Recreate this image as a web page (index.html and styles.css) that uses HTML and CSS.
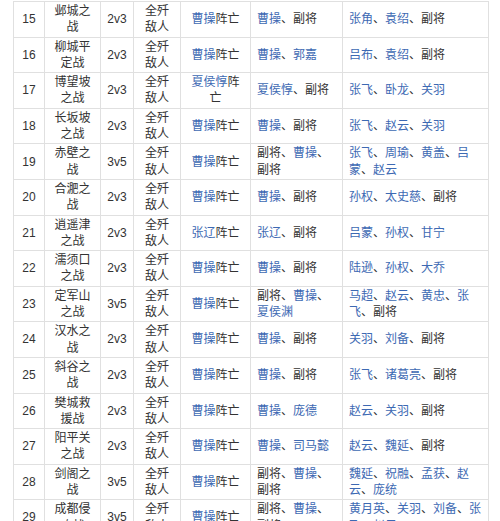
FILE: index.html
```html
<!DOCTYPE html>
<html lang="zh-CN">
<head>
<meta charset="utf-8">
<title>战役列表</title>
<link rel="stylesheet" href="styles.css">
</head>
<body>
<table class="battles">
<colgroup>
<col class="c-no"><col class="c-name"><col class="c-mode"><col class="c-cond"><col class="c-fail"><col class="c-ours"><col class="c-foe">
</colgroup>
<tbody>
<tr><td class="ctr">15</td><td class="ctr">邺城之战</td><td class="ctr nw">2v3</td><td class="ctr">全歼敌人</td><td class="ctr"><span class="l">曹操</span>阵亡</td><td><span class="l">曹操</span>、副将</td><td class="foe"><span class="l">张角</span>、<span class="l">袁绍</span>、副将</td></tr>
<tr><td class="ctr">16</td><td class="ctr">柳城平定战</td><td class="ctr nw">2v3</td><td class="ctr">全歼敌人</td><td class="ctr"><span class="l">曹操</span>阵亡</td><td><span class="l">曹操</span>、<span class="l">郭嘉</span></td><td class="foe"><span class="l">吕布</span>、<span class="l">袁绍</span>、副将</td></tr>
<tr><td class="ctr">17</td><td class="ctr">博望坡之战</td><td class="ctr nw">2v3</td><td class="ctr">全歼敌人</td><td class="ctr"><span class="l">夏侯惇</span>阵亡</td><td><span class="l">夏侯惇</span>、副将</td><td class="foe"><span class="l">张飞</span>、<span class="l">卧龙</span>、<span class="l">关羽</span></td></tr>
<tr><td class="ctr">18</td><td class="ctr">长坂坡之战</td><td class="ctr nw">2v3</td><td class="ctr">全歼敌人</td><td class="ctr"><span class="l">曹操</span>阵亡</td><td><span class="l">曹操</span>、副将</td><td class="foe"><span class="l">张飞</span>、<span class="l">赵云</span>、<span class="l">关羽</span></td></tr>
<tr><td class="ctr">19</td><td class="ctr">赤壁之战</td><td class="ctr nw">3v5</td><td class="ctr">全歼敌人</td><td class="ctr"><span class="l">曹操</span>阵亡</td><td>副将、<span class="l">曹操</span>、副将</td><td class="foe"><span class="l">张飞</span>、<span class="l">周瑜</span>、<span class="l">黄盖</span>、<span class="l">吕蒙</span>、<span class="l">赵云</span></td></tr>
<tr><td class="ctr">20</td><td class="ctr">合淝之战</td><td class="ctr nw">2v3</td><td class="ctr">全歼敌人</td><td class="ctr"><span class="l">曹操</span>阵亡</td><td><span class="l">曹操</span>、副将</td><td class="foe"><span class="l">孙权</span>、<span class="l">太史慈</span>、副将</td></tr>
<tr><td class="ctr">21</td><td class="ctr">逍遥津之战</td><td class="ctr nw">2v3</td><td class="ctr">全歼敌人</td><td class="ctr"><span class="l">张辽</span>阵亡</td><td><span class="l">张辽</span>、副将</td><td class="foe"><span class="l">吕蒙</span>、<span class="l">孙权</span>、<span class="l">甘宁</span></td></tr>
<tr><td class="ctr">22</td><td class="ctr">濡须口之战</td><td class="ctr nw">2v3</td><td class="ctr">全歼敌人</td><td class="ctr"><span class="l">曹操</span>阵亡</td><td><span class="l">曹操</span>、副将</td><td class="foe"><span class="l">陆逊</span>、<span class="l">孙权</span>、<span class="l">大乔</span></td></tr>
<tr><td class="ctr">23</td><td class="ctr">定军山之战</td><td class="ctr nw">3v5</td><td class="ctr">全歼敌人</td><td class="ctr"><span class="l">曹操</span>阵亡</td><td>副将、<span class="l">曹操</span>、<span class="l">夏侯渊</span></td><td class="foe"><span class="l">马超</span>、<span class="l">赵云</span>、<span class="l">黄忠</span>、<span class="l">张飞</span>、副将</td></tr>
<tr><td class="ctr">24</td><td class="ctr">汉水之战</td><td class="ctr nw">2v3</td><td class="ctr">全歼敌人</td><td class="ctr"><span class="l">曹操</span>阵亡</td><td><span class="l">曹操</span>、副将</td><td class="foe"><span class="l">关羽</span>、<span class="l">刘备</span>、副将</td></tr>
<tr><td class="ctr">25</td><td class="ctr">斜谷之战</td><td class="ctr nw">2v3</td><td class="ctr">全歼敌人</td><td class="ctr"><span class="l">曹操</span>阵亡</td><td><span class="l">曹操</span>、副将</td><td class="foe"><span class="l">张飞</span>、<span class="l">诸葛亮</span>、副将</td></tr>
<tr><td class="ctr">26</td><td class="ctr">樊城救援战</td><td class="ctr nw">2v3</td><td class="ctr">全歼敌人</td><td class="ctr"><span class="l">曹操</span>阵亡</td><td><span class="l">曹操</span>、<span class="l">庞德</span></td><td class="foe"><span class="l">赵云</span>、<span class="l">关羽</span>、副将</td></tr>
<tr><td class="ctr">27</td><td class="ctr">阳平关之战</td><td class="ctr nw">2v3</td><td class="ctr">全歼敌人</td><td class="ctr"><span class="l">曹操</span>阵亡</td><td><span class="l">曹操</span>、<span class="l">司马懿</span></td><td class="foe"><span class="l">赵云</span>、<span class="l">魏延</span>、副将</td></tr>
<tr><td class="ctr">28</td><td class="ctr">剑阁之战</td><td class="ctr nw">3v5</td><td class="ctr">全歼敌人</td><td class="ctr"><span class="l">曹操</span>阵亡</td><td>副将、<span class="l">曹操</span>、副将</td><td class="foe"><span class="l">魏延</span>、<span class="l">祝融</span>、<span class="l">孟获</span>、<span class="l">赵云</span>、<span class="l">庞统</span></td></tr>
<tr><td class="ctr">29</td><td class="ctr">成都侵攻战</td><td class="ctr nw">3v5</td><td class="ctr">全歼敌人</td><td class="ctr"><span class="l">曹操</span>阵亡</td><td>副将、<span class="l">曹操</span>、副将</td><td class="foe"><span class="keep"><span class="l">黄月英</span>、<span class="l">关羽</span>、<span class="l">刘备</span>、<span class="l">张</span></span><br><span class="l">飞</span>、<span class="l">赵云</span></td></tr>
</tbody>
</table>
</body>
</html>
```

FILE: styles.css
```css
html, body {
  margin: 0;
  padding: 0;
  background: #ffffff;
}

.battles {
  margin: 1px 0 0 13px;
  width: 475px;
  table-layout: fixed;
  border-collapse: collapse;
  font-family: "Liberation Sans", "Noto Sans CJK SC", sans-serif;
  font-size: 12px;
  line-height: 16.3px;
  color: #333333;
}

.c-no { width: 31px; }
.c-name { width: 56px; }
.c-mode { width: 33px; }
.c-cond { width: 47px; }
.c-fail { width: 70px; }
.c-ours { width: 92px; }
.c-foe { width: 146px; }

.battles td {
  border: 1px solid #e0e0e0;
  padding: 1px 6px;
  vertical-align: middle;
  text-align: left;
}

.battles td.ctr {
  text-align: center;
}

.battles td.nw {
  white-space: nowrap;
  padding: 1px 2px;
}

.battles td.foe {
  padding-right: 0;
}

.keep {
  white-space: nowrap;
}

.l {
  color: #3d69b3;
}
```
